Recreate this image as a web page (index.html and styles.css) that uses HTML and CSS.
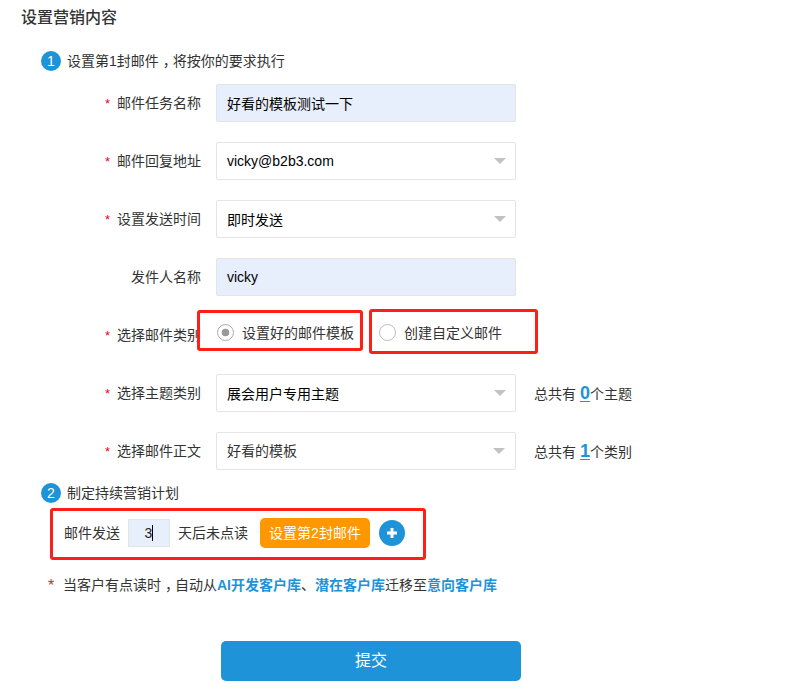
FILE: index.html
```html
<!DOCTYPE html>
<html lang="zh-CN">
<head>
<meta charset="utf-8">
<title>设置营销内容</title>
<link rel="stylesheet" href="styles.css">
</head>
<body>
<main class="page">
  <h1 class="title">设置营销内容</h1>
  <h2 class="step"><span class="step-no">1</span><span>设置第1封邮件<span class="comma">，</span>将按你的要求执行</span></h2>
  <form class="form">
    <div class="row"><label class="label"><i class="req">*</i>邮件任务名称</label><div class="field filled">好看的模板测试一下</div></div>
    <div class="row"><label class="label"><i class="req">*</i>邮件回复地址</label><div class="field latin">vicky@b2b3.com<span class="arrow"></span></div></div>
    <div class="row"><label class="label"><i class="req">*</i>设置发送时间</label><div class="field">即时发送<span class="arrow"></span></div></div>
    <div class="row"><label class="label">发件人名称</label><div class="field filled latin">vicky</div></div>
    <div class="row radio-row"><label class="label"><i class="req">*</i>选择邮件类别</label>
      <div class="radios">
        <div class="radio on"><span class="dot"></span>设置好的邮件模板<span class="mark mark-a"></span></div>
        <div class="radio"><span class="dot"></span>创建自定义邮件<span class="mark mark-b"></span></div>
      </div>
    </div>
    <div class="row"><label class="label"><i class="req">*</i>选择主题类别</label><div class="field">展会用户专用主题<span class="arrow"></span></div><div class="count">总共有 <a class="num">0</a>个主题</div></div>
    <div class="row"><label class="label"><i class="req">*</i>选择邮件正文</label><div class="field muted">好看的模板<span class="arrow"></span></div><div class="count">总共有 <a class="num">1</a>个类别</div></div>
  </form>
  <h2 class="step step-two"><span class="step-no">2</span><span>制定持续营销计划</span></h2>
  <div class="plan">
    <span>邮件发送</span>
    <span class="days">3<span class="caret"></span></span>
    <span class="after">天后未点读</span>
    <span class="second">设置第2封邮件</span>
    <span class="add"><svg width="10" height="10" viewBox="0 0 10 10"><path d="M5 0v10M0 5h10" stroke="#fff" stroke-width="3"/></svg></span>
  </div>
  <p class="note"><i class="star">*</i><span>当客户有点读时<span class="comma">，</span>自动从<b>AI开发客户库</b>、<b>潜在客户库</b>迁移至<b>意向客户库</b></span></p>
  <div class="submit">提交</div>
</main>
</body>
</html>
```
FILE: styles.css
```css
* { box-sizing: border-box; }
body {
  margin: 0;
  background: #fff;
  color: #333;
  font: 14px/20px "Liberation Sans", "Noto Sans CJK SC", sans-serif;
}
.page { height: 689px; overflow: hidden; white-space: nowrap; }
.title { margin: 0; padding: 6px 0 0 21px; height: 51px; font-size: 16px; line-height: 24px; font-weight: 500; }
.step { display: flex; align-items: center; gap: 6px; margin: 0; padding-left: 41px; height: 20px; font-size: 14px; font-weight: 400; }
.step-no { width: 20px; height: 20px; border-radius: 50%; background: #1e93d8; color: #fff; text-align: center; }
.comma { padding: 0 3px 0 4px; font-feature-settings: "halt"; }
.form { display: grid; gap: 20px; margin-top: 13px; }
.row { display: flex; height: 38px; align-items: center; }
.label { width: 201px; margin-right: 15px; text-align: right; }
.req { margin-right: 7px; color: #f00020; font-style: normal; font-size: 13px; }
.field {
  display: flex; align-items: center; justify-content: space-between;
  width: 300px; height: 38px; padding: 2px 9px 0 10px;
  border: 1px solid #e4e4e4; border-radius: 2px; color: #000;
}
.filled { background: #e7eefc; }
.latin { padding-top: 0; }
.latin .arrow { margin-top: 0; }
.muted { padding: 0 10px 0 10px; color: #333; }
.arrow { margin-top: -2px; border: 6px solid transparent; border-top-color: #c2c2c2; border-bottom: 0; }
.muted .arrow { margin-top: 0; }
.count { margin-left: 18px; }
.num { color: #1e93d8; font-size: 18px; font-weight: 700; text-decoration: underline; text-decoration-thickness: 1px; text-underline-offset: 2px; }
.radios { display: flex; gap: 24px; padding-bottom: 5px; }
.radio { position: relative; left: 1px; display: flex; align-items: center; gap: 8px; }
.radio + .radio { left: 2px; }
.radio-row .label { padding-top: 1px; }
.dot { width: 17px; height: 17px; border: 1.5px solid #bbb; border-radius: 50%; }
.on .dot { border-color: #aaa; background: radial-gradient(circle, #999 0 3.5px, transparent 4.2px); }
.mark { position: absolute; border: 3px solid #fc2016; border-radius: 3px; }
.mark-a { left: -20px; top: -13px; width: 166px; height: 41px; }
.mark-b { left: -10px; top: -14px; width: 169px; height: 45px; }
.step-two { margin-top: 13px; }
.plan {
  display: flex; align-items: center; width: 376px; height: 52px;
  margin: 5px 0 0 50px; padding: 0 0 2px 11px; border: 3px solid #fc2016; border-radius: 3px;
}
.days { display: flex; align-items: center; justify-content: center; width: 42px; height: 28px; margin: 0 8px; background: #e7eefc; border: 1px solid #e4e4e4; color: #222; }
.caret { width: 1px; height: 16px; background: #000; }
.second { width: 110px; height: 30px; margin: 0 9px 0 12px; border-radius: 5px; background: #ff9700; color: #fff; line-height: 30px; text-align: center; }
.add { display: grid; place-items: center; width: 26px; height: 26px; border-radius: 50%; background: #1e93d8; }
.note { display: flex; margin: 15px 0 0 48px; }
.note b { color: #1e93d8; }
.star { width: 15px; color: #c0322c; font-style: normal; font-size: 16px; line-height: 22px; height: 20px; }
.submit { width: 300px; height: 40px; margin: 46px 0 0 221px; border-radius: 5px; background: #1e93d8; color: #fff; font-size: 16px; line-height: 40px; text-align: center; }
```
